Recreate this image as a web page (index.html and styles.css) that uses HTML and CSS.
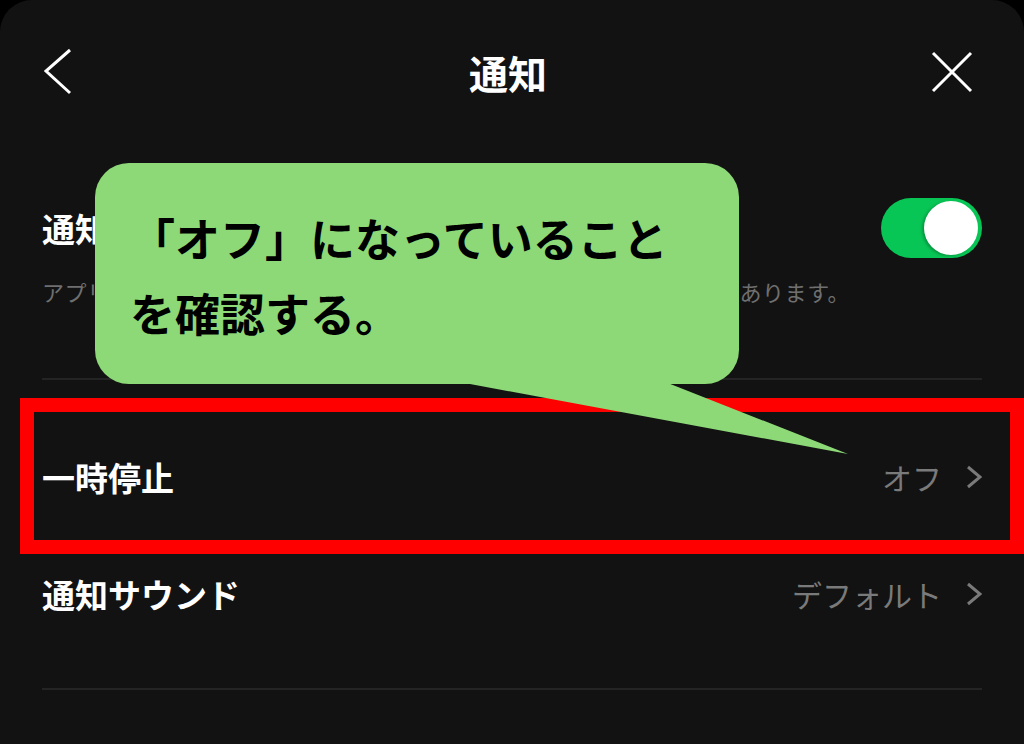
FILE: index.html
```html
<!DOCTYPE html>
<html lang="ja">
<head>
  <meta charset="UTF-8">
  <meta name="viewport" content="width=device-width, initial-scale=1.0">
  <title>通知</title>
  <link rel="stylesheet" href="styles.css">
</head>
<body>
  <div class="screen">
    <header class="header">
      <svg class="icon back" width="30" height="50" viewBox="0 0 30 50">
        <polyline points="27,3 3,24 27,46" fill="none" stroke="#fff" stroke-width="3"/>
      </svg>
      <h1 class="title">通知</h1>
      <svg class="icon close" width="42" height="42" viewBox="0 0 42 42">
        <path d="M2 2 L40 40 M40 2 L2 40" fill="none" stroke="#fff" stroke-width="3"/>
      </svg>
    </header>

    <section class="toggle-section">
      <div class="toggle-row">
        <span class="label">通知</span>
        <div class="switch on"><div class="knob"></div></div>
      </div>
      <p class="note">アプリがバックグラウンドで起動していないと通知が届かない場合があります。</p>
    </section>

    <div class="divider"></div>

    <ul class="list">
      <li class="row">
        <span class="label">一時停止</span>
        <span class="value">オフ
          <svg class="chev" width="16" height="24" viewBox="0 0 16 24"><polyline points="2,2 14,12 2,22" fill="none" stroke="#7a7a7a" stroke-width="3"/></svg>
        </span>
      </li>
      <li class="row">
        <span class="label">通知サウンド</span>
        <span class="value">デフォルト
          <svg class="chev" width="16" height="24" viewBox="0 0 16 24"><polyline points="2,2 14,12 2,22" fill="none" stroke="#7a7a7a" stroke-width="3"/></svg>
        </span>
      </li>
    </ul>

    <div class="divider"></div>

    <!-- annotations -->
    <div class="highlight"></div>
    <div class="callout">
      <p>「オフ」になっていること<br>を確認する。</p>
    </div>
    <svg class="tail" width="400" height="90" viewBox="0 0 400 90">
      <polygon points="10,0 185,0 388,80 10,10" fill="#8dd977"/>
    </svg>
  </div>
</body>
</html>
```

FILE: styles.css
```css
* {
  box-sizing: border-box;
}
html, body {
  margin: 0;
  padding: 0;
  background: #000;
}
body {
  font-family: "Noto Sans CJK JP", "Noto Sans", sans-serif;
  color: #fff;
}
.screen {
  position: relative;
  width: 1024px;
  height: 744px;
  background: #121212;
  border-radius: 32px 32px 0 0;
  overflow: hidden;
}
.header {
  display: grid;
  grid-template-columns: 1fr auto 1fr;
  align-items: center;
  height: 144px;
  padding: 0 51px 0 43px;
}
.icon {
  display: block;
}
.close {
  justify-self: end;
}
.title {
  margin: 0;
  font-size: 39px;
  font-weight: 700;
  line-height: 44px;
}
.toggle-section {
  padding: 54px 42px 72px;
}
.toggle-row {
  display: flex;
  justify-content: space-between;
  align-items: center;
}
.label {
  font-size: 33px;
  font-weight: 700;
  line-height: 44px;
}
.switch {
  width: 101px;
  height: 60px;
  border-radius: 30px;
  background: #08c655;
  position: relative;
}
.knob {
  position: absolute;
  top: 3px;
  right: 4px;
  width: 54px;
  height: 54px;
  border-radius: 50%;
  background: #fff;
  box-shadow: -2px 1px 3px rgba(0,0,0,0.25);
}
.note {
  margin: 18px 0 0;
  font-size: 22px;
  letter-spacing: 0.55px;
  line-height: 30px;
  color: #6f6f6f;
}
.divider {
  height: 2px;
  margin: 0 42px;
  background: #242424;
}
.list {
  list-style: none;
  margin: 0;
  padding: 38px 42px 36px;
}
.row {
  display: flex;
  justify-content: space-between;
  align-items: center;
  height: 117px;
}
.value {
  display: flex;
  align-items: center;
  gap: 24px;
  font-size: 30px;
  color: #7a7a7a;
}
.chev {
  display: block;
}
.highlight {
  position: absolute;
  left: 20px;
  top: 398px;
  width: 1004px;
  height: 156px;
  border: 14px solid #ff0000;
}
.callout {
  position: absolute;
  left: 95px;
  top: 163px;
  width: 644px;
  height: 221px;
  border-radius: 34px;
  background: #8dd977;
  padding: 37px 0 0 35px;
}
.callout p {
  margin: 0;
  font-size: 45px;
  font-weight: 700;
  line-height: 75px;
  color: #000;
}
.tail {
  position: absolute;
  left: 460px;
  top: 374px;
}
```
